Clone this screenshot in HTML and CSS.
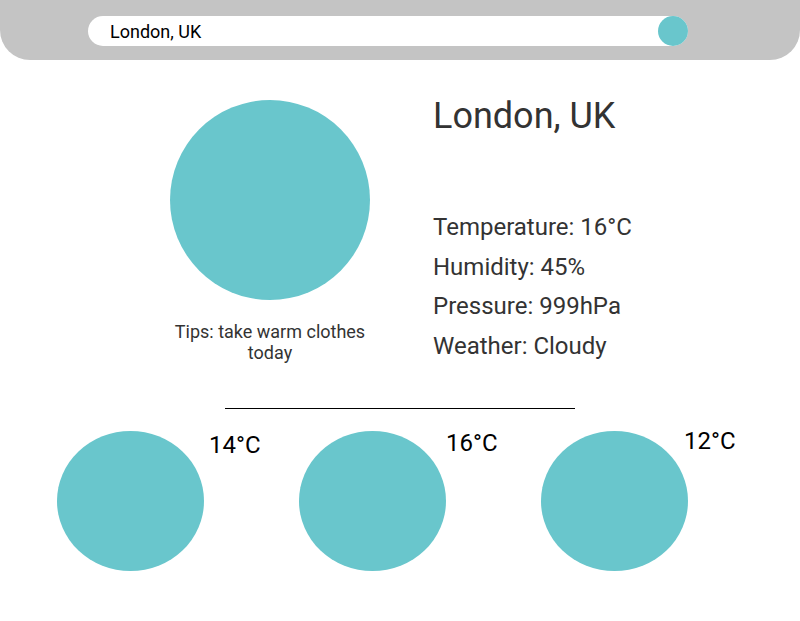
FILE: index.html
```html
<!DOCTYPE html>
<html lang="en">
<head>
<meta charset="utf-8">
<title>Weather</title>
<link rel="stylesheet" href="styles.css">
</head>
<body>
<header class="topbar">
  <div class="search">
    <span class="search-text">London, UK</span>
    <span class="search-btn"></span>
  </div>
</header>
<main class="current">
  <div class="now">
    <div class="big-icon"></div>
    <p class="tips">Tips: take warm clothes today</p>
  </div>
  <div class="info">
    <h1 class="city">London, UK</h1>
    <ul class="stats">
      <li>Temperature: 16°C</li>
      <li>Humidity: 45%</li>
      <li>Pressure: 999hPa</li>
      <li>Weather: Cloudy</li>
    </ul>
  </div>
</main>
<hr class="divider">
<section class="forecast">
  <div class="day day-1"><div class="day-icon"></div><span class="day-temp">14°C</span></div>
  <div class="day day-2"><div class="day-icon"></div><span class="day-temp">16°C</span></div>
  <div class="day day-3"><div class="day-icon"></div><span class="day-temp">12°C</span></div>
</section>
</body>
</html>
```
FILE: styles.css
```css
* { box-sizing: border-box; }
html, body { margin: 0; padding: 0; background: #fff; }
body { font-family: Roboto, "Liberation Sans", sans-serif; color: #333; width: 800px; }

.topbar {
  height: 60px;
  background: #c4c4c4;
  border-radius: 0 0 30px 30px;
  padding: 16px 0 0 88px;
}
.search {
  width: 600px;
  height: 30px;
  background: #fff;
  border-radius: 15px;
  display: flex;
  align-items: center;
  justify-content: space-between;
  padding-left: 22px;
}
.search-text { font-size: 18px; color: #000; }
.search-btn {
  width: 30px; height: 30px; border-radius: 50%;
  background: #69c6cc;
}

.current {
  display: flex;
  align-items: flex-start;
  padding-top: 35px;
}
.now {
  margin-left: 170px;
  width: 200px;
  padding-top: 5px;
  display: flex;
  flex-direction: column;
  align-items: center;
}
.big-icon {
  width: 200px; height: 200px; border-radius: 50%;
  background: #69c6cc;
}
.tips {
  margin: 21px 0 0;
  width: 200px;
  text-align: center;
  font-size: 18px;
  line-height: 21px;
  color: #333;
}
.info { margin-left: 63px; }
.city {
  margin: 0;
  font-size: 36px;
  font-weight: 400;
  line-height: normal;
  color: #333;
}
.stats {
  list-style: none;
  margin: 71px 0 0;
  padding: 0;
  font-size: 24px;
  line-height: 39.6px;
}

.divider {
  width: 350px;
  margin: 42px 0 0 225px;
  border: 0;
  border-top: 1px solid #000;
  height: 0;
}

.forecast {
  display: flex;
  padding: 22px 0 0 57px;
}
.day {
  width: 242px;
  display: flex;
  align-items: flex-start;
}
.day-icon {
  width: 147px; height: 140px; border-radius: 50%;
  background: #69c6cc;
  flex: none;
}
.day-temp {
  font-size: 24px;
  line-height: normal;
  color: #000;
}
.day-1 .day-temp { margin-left: 5px; margin-top: 0; }
.day-2 .day-temp { margin-left: 0; margin-top: -2px; }
.day-3 .day-temp { margin-left: -4px; margin-top: -4px; }
```
